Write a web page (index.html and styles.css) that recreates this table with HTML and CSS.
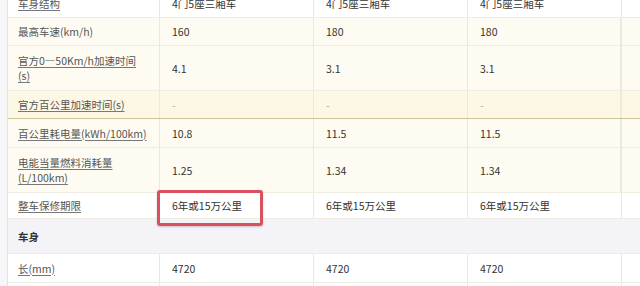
FILE: index.html
```html
<!DOCTYPE html>
<html lang="zh">
<head>
<meta charset="utf-8">
<link rel="stylesheet" href="styles.css">
</head>
<body>
<div class="page">
  <div class="sheet">
    <div class="row h28 white">
      <div class="cell label"><a>车身结构</a></div>
      <div class="cell">4门5座三厢车</div>
      <div class="cell">4门5座三厢车</div>
      <div class="cell">4门5座三厢车</div>
      <div class="cell"></div>
    </div>
    <div class="row h28 cream">
      <div class="cell label"><span>最高车速(km/h)</span></div>
      <div class="cell">160</div>
      <div class="cell">180</div>
      <div class="cell">180</div>
      <div class="cell"></div>
    </div>
    <div class="row h45 cream">
      <div class="cell label"><a>官方0—50Km/h加速时间<br>(s)</a></div>
      <div class="cell">4.1</div>
      <div class="cell">3.1</div>
      <div class="cell">3.1</div>
      <div class="cell"></div>
    </div>
    <div class="row h28 hover">
      <div class="cell label"><a>官方百公里加速时间(s)</a></div>
      <div class="cell dash">-</div>
      <div class="cell dash">-</div>
      <div class="cell dash">-</div>
      <div class="cell"></div>
    </div>
    <div class="row h29 cream">
      <div class="cell label"><a>百公里耗电量(kWh/100km)</a></div>
      <div class="cell">10.8</div>
      <div class="cell">11.5</div>
      <div class="cell">11.5</div>
      <div class="cell"></div>
    </div>
    <div class="row h45 cream">
      <div class="cell label"><a>电能当量燃料消耗量(L/100km)</a></div>
      <div class="cell">1.25</div>
      <div class="cell">1.34</div>
      <div class="cell">1.34</div>
      <div class="cell"></div>
    </div>
    <div class="row h26 white">
      <div class="cell label"><a>整车保修期限</a></div>
      <div class="cell marked">6年或15万公里<span class="mark"></span></div>
      <div class="cell">6年或15万公里</div>
      <div class="cell">6年或15万公里</div>
      <div class="cell"></div>
    </div>
    <div class="section">车身</div>
    <div class="row h29 white">
      <div class="cell label"><a>长(mm)</a></div>
      <div class="cell">4720</div>
      <div class="cell">4720</div>
      <div class="cell">4720</div>
      <div class="cell"></div>
    </div>
    <div class="row h28 white">
      <div class="cell label"></div>
      <div class="cell"></div>
      <div class="cell"></div>
      <div class="cell"></div>
      <div class="cell"></div>
    </div>
  </div>
</div>
</body>
</html>
```
FILE: styles.css
```css
html, body {
  margin: 0;
  padding: 0;
}
body {
  background: #f6f6f8;
  font-family: "Noto Sans CJK SC", "Noto Sans", sans-serif;
  font-size: 10.5px;
  line-height: 15px;
  color: #333;
  width: 640px;
  height: 286px;
  overflow: hidden;
}
.page {
  padding-left: 7px;
  height: 286px;
  overflow: hidden;
}
.sheet {
  margin-top: -10px;
  width: 769px;
  border-left: 1px solid #e6e4de;
  background: #fff;
}
.row {
  display: grid;
  grid-template-columns: 152px 154px 154px 150px 4px 154px;
  border-bottom: 1px solid #efece2;
  box-sizing: border-box;
}
.row > .cell:nth-child(4) {
  grid-column: 4 / span 2;
}
.row > .cell:last-child {
  grid-column: 6;
}
.h26 { height: 26px; }
.h28 { height: 28px; }
.h29 { height: 29px; }
.h45 { height: 45px; }
.white { background: #fff; }
.cream { background: #fefcf2; }
.cream > .cell:nth-child(4),
.hover > .cell:nth-child(4) {
  box-shadow: inset -5px 0 0 -4px #ece9df;
}
.hover {
  background: #fdf8e6;
  border-bottom-color: #cdc493;
}
.cell {
  display: flex;
  align-items: center;
  padding-left: 12px;
  border-right: 1px solid #ebe8e0;
  box-sizing: border-box;
  white-space: nowrap;
  position: relative;
}
.cell.label {
  padding-left: 10px;
  padding-right: 8px;
  white-space: normal;
  color: #555;
}
.cell.label a {
  color: #555;
  text-decoration: underline;
  text-decoration-color: #777;
  text-underline-offset: 2px;
}
.cell.dash {
  color: #aaa;
}
.mark {
  position: absolute;
  left: -3px;
  top: -3px;
  width: 106px;
  height: 36px;
  box-sizing: border-box;
  border: 3px solid #d9505f;
  border-radius: 3px;
  box-shadow: 0 1px 2px rgba(120, 30, 40, 0.25);
}
.section {
  height: 35px;
  box-sizing: border-box;
  background: #f3f3f8;
  border-bottom: 1px solid #ebebef;
  display: flex;
  align-items: center;
  padding-left: 10px;
  font-weight: bold;
  color: #333;
}
```
